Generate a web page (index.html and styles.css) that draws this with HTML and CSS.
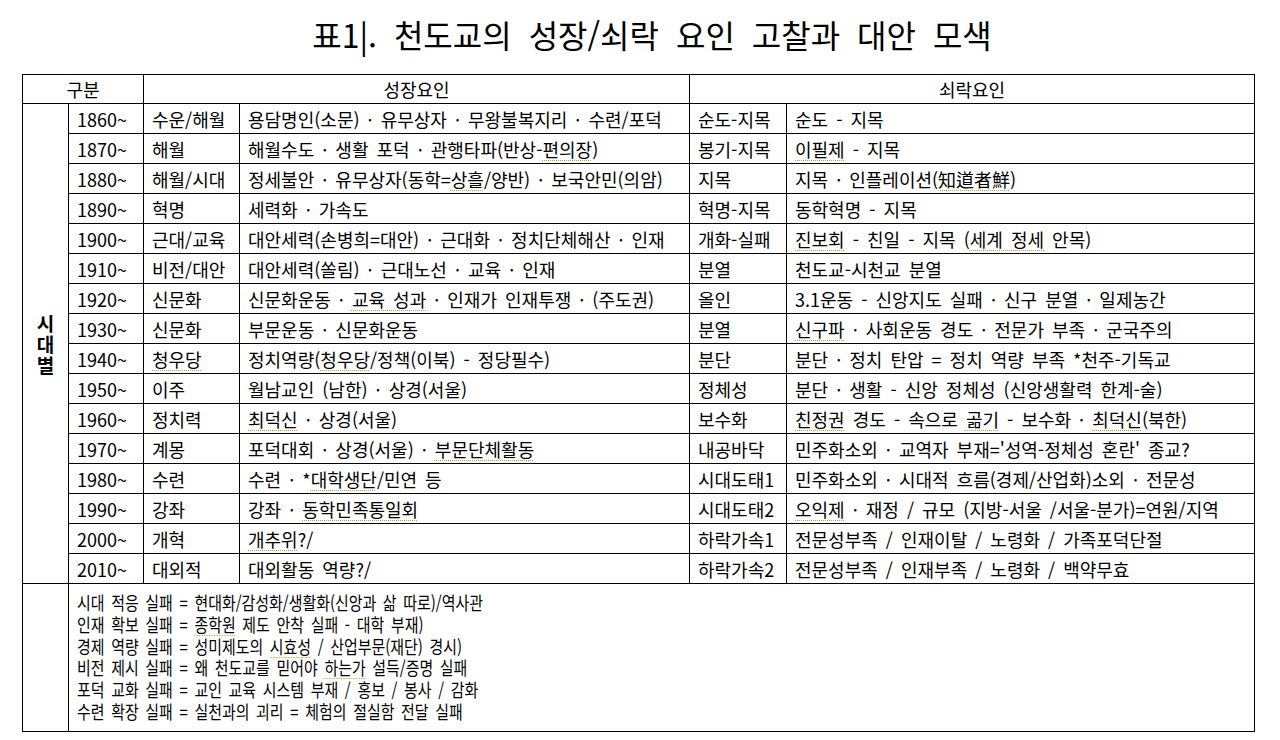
FILE: index.html
```html
<!DOCTYPE html>
<html lang="ko">
<head>
<meta charset="utf-8">
<title>표1. 천도교의 성장/쇠락 요인 고찰과 대안 모색</title>
<link rel="stylesheet" href="styles.css">
</head>
<body>
<h1 class="title">표1|. 천도교의 성장/쇠락 요인 고찰과 대안 모색</h1>
<table class="grid">
  <colgroup>
    <col class="c-era">
    <col class="c-year">
    <col class="c-name">
    <col class="c-grow">
    <col class="c-dname">
    <col class="c-decl">
  </colgroup>
  <thead>
    <tr class="head">
      <th colspan="2">구분</th>
      <th colspan="2">성장요인</th>
      <th colspan="2">쇠락요인</th>
    </tr>
  </thead>
  <tbody>
    <tr>
      <td class="era" rowspan="16"><span class="era-text">시<br>대<br>별</span></td>
      <td>1860~</td><td>수운/해월</td><td>용담명인(소문) · 유무상자 · 무왕불복지리 · 수련/포덕</td><td>순도-지목</td><td>순도 - 지목</td>
    </tr>
    <tr><td>1870~</td><td>해월</td><td>해월수도 · 생활 포덕 · 관행타파(반상-<span class="sp">편의장</span>)</td><td>봉기-지목</td><td><span class="sp">이필제</span> - 지목</td></tr>
    <tr><td>1880~</td><td>해월/시대</td><td>정세불안 · 유무상자(동학=<span class="sp">상흘</span>/양반) · 보국안민(의암)</td><td>지목</td><td>지목 · 인플레이션(<span class="sp">知道者鮮</span>)</td></tr>
    <tr><td>1890~</td><td>혁명</td><td>세력화 · 가속도</td><td>혁명-지목</td><td>동학혁명 - 지목</td></tr>
    <tr><td>1900~</td><td>근대/교육</td><td>대안세력(손병희=대안) · 근대화 · 정치단체해산 · 인재</td><td>개화-실패</td><td><span class="sp">진보회</span> - 친일 - 지목 (<span class="sp">세계 정세</span> 안목)</td></tr>
    <tr><td>1910~</td><td>비전/대안</td><td>대안세력(쏠림) · 근대노선 · 교육 · 인재</td><td>분열</td><td>천도교-시천교 분열</td></tr>
    <tr><td>1920~</td><td>신문화</td><td>신문화운동 · <span class="sp">교육 성과</span> · 인재가 인재투쟁 · (주도권)</td><td>올인</td><td>3.1운동 - 신앙지도 실패 · 신구 분열 · 일제농간</td></tr>
    <tr><td>1930~</td><td>신문화</td><td>부문운동 · 신문화운동</td><td>분열</td><td><span class="sp">신구파</span> · 사회운동 경도 · 전문가 부족 · 군국주의</td></tr>
    <tr><td>1940~</td><td><span class="sp">청우당</span></td><td>정치역량(<span class="sp">청우당</span>/정책(이북) - 정당필수)</td><td>분단</td><td>분단 · 정치 탄압 = 정치 역량 부족 *천주-기독교</td></tr>
    <tr><td>1950~</td><td>이주</td><td>월남교인 (남한) · 상경(서울)</td><td>정체성</td><td>분단 · 생활 - 신앙 정체성 (신앙생활력 한계-술)</td></tr>
    <tr><td>1960~</td><td>정치력</td><td><span class="sp">최덕신</span> · 상경(서울)</td><td>보수화</td><td><span class="sp">친정권</span> 경도 - 속으로 <span class="sp">곪기</span> - 보수화 · <span class="sp">최덕신</span>(북한)</td></tr>
    <tr><td>1970~</td><td>계몽</td><td>포덕대회 · 상경(서울) · <span class="sp">부문단체활동</span></td><td>내공바닥</td><td>민주화소외 · 교역자 부재='성역-정체성 혼란' 종교?</td></tr>
    <tr><td>1980~</td><td>수련</td><td>수련 · *<span class="sp">대학생단</span>/민연 등</td><td>시대도태1</td><td>민주화소외 · 시대적 흐름(경제/산업화)소외 · 전문성</td></tr>
    <tr><td>1990~</td><td>강좌</td><td>강좌 · <span class="sp">동학민족통일회</span></td><td>시대도태2</td><td><span class="sp">오익제</span> · 재정 / 규모 (지방-서울 /서울-분가)=연원/지역</td></tr>
    <tr><td>2000~</td><td>개혁</td><td><span class="sp">개추위</span>?/</td><td>하락가속1</td><td>전문성부족 / 인재이탈 / 노령화 / 가족포덕단절</td></tr>
    <tr><td>2010~</td><td>대외적</td><td>대외활동 역량?/</td><td>하락가속2</td><td>전문성부족 / 인재부족 / 노령화 / 백약무효</td></tr>
    <tr class="summary">
      <td></td>
      <td colspan="5">
        <div class="notes">
          <p>시대 적응 실패 = 현대화/감성화/생활화(신앙과 삶 따로)/역사관</p>
          <p>인재 확보 실패 = <span class="sp">종학원</span> 제도 안착 실패 - 대학 부재)</p>
          <p>경제 역량 실패 = 성미제도의 <span class="sp">시효성</span> / 산업부문(재단) 경시)</p>
          <p>비전 제시 실패 = 왜 천도교를 믿어야 <span class="sp">하는가</span> 설득/증명 실패</p>
          <p>포덕 교화 실패 = 교인 교육 시스템 부재 / 홍보 / 봉사 / 감화</p>
          <p>수련 확장 실패 = 실천과의 괴리 = 체험의 절실함 전달 실패</p>
        </div>
      </td>
    </tr>
  </tbody>
</table>
</body>
</html>
```

FILE: styles.css
```css
html, body {
  margin: 0;
  padding: 0;
  background: #ffffff;
}

body {
  font-family: "Noto Sans CJK KR", "Noto Sans", sans-serif;
  color: #000000;
  width: 1280px;
  height: 740px;
  overflow: hidden;
}

.title {
  margin: 0;
  padding-top: 14px;
  height: 60px;
  box-sizing: border-box;
  text-align: center;
  font-size: 32px;
  font-weight: 400;
  line-height: 40px;
  word-spacing: 8px;
  padding-left: 24px;
}

.grid {
  margin: 14px 0 0 22px;
  width: 1232px;
  table-layout: fixed;
  border-collapse: collapse;
  font-size: 18px;
}

.c-era { width: 46px; }
.c-year { width: 75px; }
.c-name { width: 96px; }
.c-grow { width: 450px; }
.c-dname { width: 97px; }
.c-decl { width: 468px; }

.grid th,
.grid td {
  border: 1px solid #000000;
  padding: 0 0 0 8px;
  white-space: nowrap;
  overflow: hidden;
  text-align: left;
  vertical-align: middle;
  line-height: 20px;
  word-spacing: 3px;
}

.grid tr {
  height: 30px;
}

.grid .head {
  height: 29px;
}

.grid th {
  font-weight: 400;
  text-align: center;
  padding: 0;
}

.grid td.era {
  padding: 0;
  text-align: center;
}

.era-text {
  display: inline-block;
  font-size: 19px;
  font-weight: 700;
  line-height: 21px;
}

.sp {
  text-decoration-line: underline;
  text-decoration-style: dotted;
  text-decoration-color: #c79a3c;
  text-decoration-thickness: 1px;
  text-underline-offset: 3px;
}

.summary td {
  vertical-align: top;
  height: 148px;
  box-sizing: border-box;
}

.notes {
  padding-top: 8px;
  height: 140px;
  box-sizing: border-box;
  transform: scaleX(0.83);
  transform-origin: left top;
  font-size: 18px;
  word-spacing: 3px;
}

.notes p {
  margin: 0;
  line-height: 21.8px;
}
```
